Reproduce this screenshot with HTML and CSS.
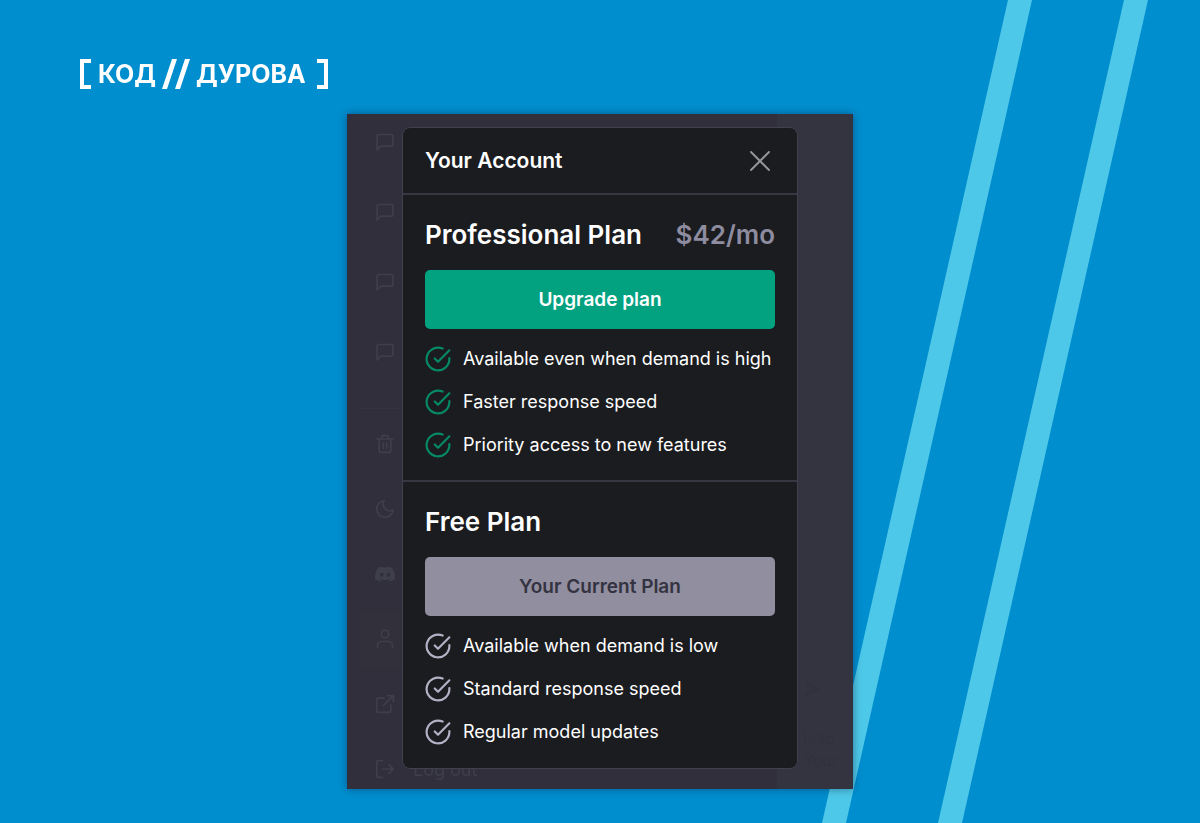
FILE: index.html
```html
<!DOCTYPE html>
<html lang="en">
<head>
<meta charset="utf-8">
<title>Your Account</title>
<link rel="stylesheet" href="styles.css">
</head>
<body>
<svg class="defs" aria-hidden="true">
  <symbol id="chat" viewBox="0 0 24 24"><path d="M21.500 15a2 2 0 0 1-2 2H7l-4.500 4.500V5a2 2 0 0 1 2-2h15a2 2 0 0 1 2 2z"/></symbol>
  <symbol id="check" viewBox="0 0 24 24"><path d="M22.500 11.080V12a10.500 10.500 0 1 1-6.230-9.590"/><path d="M22.500 4 12 14.510l-3-3"/></symbol>
</svg>
<svg class="stripes" viewBox="0 0 1200 823" preserveAspectRatio="xMaxYMid slice" aria-hidden="true">
  <path d="M1008 0h24L846 823h-24zM1124 0h24L962 823h-24z"/>
</svg>
<div class="page">
  <header class="logo" lang="ru">
    <svg class="bracket" viewBox="0 0 12 30" aria-hidden="true"><path d="M11 2H2v26h9"/></svg>
    <span class="word first">КОД</span>
    <svg class="slashes" viewBox="0 0 28 30" aria-hidden="true"><path d="M10 0h5L5 30H0zM23 0h5L18 30h-5z"/></svg>
    <span class="word">ДУРОВА</span>
    <svg class="bracket last" viewBox="0 0 12 30" aria-hidden="true"><path d="M1 2h9v26H1"/></svg>
  </header>
  <main class="shot">
    <div class="backdrop">
      <nav class="sidebar" aria-label="Sidebar">
        <div class="chats">
          <a href="#" aria-label="Chat 1"><svg class="icon"><use href="#chat"/></svg></a>
          <a href="#" aria-label="Chat 2"><svg class="icon"><use href="#chat"/></svg></a>
          <a href="#" aria-label="Chat 3"><svg class="icon"><use href="#chat"/></svg></a>
          <a href="#" aria-label="Chat 4"><svg class="icon"><use href="#chat"/></svg></a>
        </div>
        <div class="tools">
          <a href="#" aria-label="Clear conversations"><svg class="icon" viewBox="0 0 24 24"><path d="M2 6h20M19 6v14a2 2 0 0 1-2 2H7a2 2 0 0 1-2-2V6M8 6V4a2 2 0 0 1 2-2h4a2 2 0 0 1 2 2v2M10 11v6M14 11v6"/></svg></a>
          <a href="#" aria-label="Dark mode"><svg class="icon" viewBox="0 0 24 24"><path d="M22 13A10 10 0 1 1 11 2a8 8 0 0 0 11 11z"/></svg></a>
          <a href="#" aria-label="Discord"><svg class="icon solid" viewBox="0 0 24 24"><path fill-rule="evenodd" d="M20.3 4.4A20 20 0 0 0 15.4 3l-.7 1.3a18 18 0 0 0-5.4 0L8.600 3a20 20 0 0 0-4.900 1.400C.6 9-.3 13.600.1 18a20 20 0 0 0 6 3l1.300-2.100-1.900-.9.400-.3a14 14 0 0 0 12.200 0l.4.3-1.900.9 1.300 2.100a20 20 0 0 0 6-3c.5-5.100-.8-9.600-3.600-13.600zM8 15.300a2.200 2.400 0 1 1 0-4.800 2.200 2.400 0 0 1 0 4.800zm8 0a2.200 2.400 0 1 1 0-4.800 2.200 2.400 0 0 1 0 4.800z"/></svg></a>
          <a href="#" class="active" aria-label="Account"><svg class="icon" viewBox="0 0 24 24"><path d="M21 22v-2a5 5 0 0 0-5-5H8a5 5 0 0 0-5 5v2"/><circle cx="12" cy="6" r="4.500"/></svg></a>
          <a href="#" aria-label="Updates"><svg class="icon" viewBox="0 0 24 24"><path d="M19 13v7a2 2 0 0 1-2 2H4a2 2 0 0 1-2-2V7a2 2 0 0 1 2-2h7M15 2h7v7M10 14 22 2"/></svg></a>
          <a href="#"><svg class="icon" viewBox="0 0 24 24"><path d="M9 22H4a2 2 0 0 1-2-2V4a2 2 0 0 1 2-2h5M17 17l5-5-5-5M22 12H9"/></svg><span>Log out</span></a>
        </div>
      </nav>
      <div class="conversation">
        <svg class="send" viewBox="0 0 24 24" aria-hidden="true"><path d="M2 2l20 10L2 22l3-8 8-2-8-2z"/></svg>
        <p>is to<br>Your</p>
      </div>
    </div>
    <section class="modal" role="dialog" aria-labelledby="title">
      <div class="modal-head">
        <h1 id="title">Your Account</h1>
        <button class="close" aria-label="Close"><svg viewBox="0 0 20 20"><path d="M1 1l18 18M19 1 1 19"/></svg></button>
      </div>
      <section class="plan pro">
        <div class="plan-head"><h2>Professional Plan</h2><span class="price">$42/mo</span></div>
        <button class="action">Upgrade plan</button>
        <ul>
          <li><svg class="check"><use href="#check"/></svg>Available even when demand is high</li>
          <li><svg class="check"><use href="#check"/></svg>Faster response speed</li>
          <li><svg class="check"><use href="#check"/></svg>Priority access to new features</li>
        </ul>
      </section>
      <section class="plan">
        <div class="plan-head"><h2>Free Plan</h2></div>
        <button class="action current">Your Current Plan</button>
        <ul>
          <li><svg class="check"><use href="#check"/></svg>Available when demand is low</li>
          <li><svg class="check"><use href="#check"/></svg>Standard response speed</li>
          <li><svg class="check"><use href="#check"/></svg>Regular model updates</li>
        </ul>
      </section>
    </section>
  </main>
</div>
</body>
</html>
```
FILE: styles.css
```css
* { box-sizing: border-box; }
body {
  margin: 0;
  background: #008ecf;
  color: #fff;
  font-family: Inter, "Liberation Sans", sans-serif;
}
h1, h2, p, ul { margin: 0; padding: 0; }
button { font: inherit; border: 0; cursor: pointer; }
svg { display: block; fill: none; flex: none; }
.defs { position: absolute; width: 0; height: 0; }
.stripes { position: fixed; inset: 0; width: 100%; height: 100%; z-index: -1; fill: #4ec8e8; }

.page { min-height: 100vh; padding: 59px 80px 33px; }
.logo { display: flex; align-items: center; height: 30px; }
.bracket { width: 12px; height: 30px; stroke: #fff; stroke-width: 4; }
.bracket.last { margin-left: 10px; }
.slashes { width: 28px; height: 30px; margin: 0 6px; fill: #fff; }
.word { font-size: 25px; font-weight: 700; line-height: 30px; }
.word.first { margin-left: 6px; }

.shot {
  display: grid;
  width: fit-content;
  margin: 25px auto 0;
  background: #343340;
  box-shadow: 0 0 8px rgba(0, 20, 50, .45);
}
.backdrop { grid-area: 1 / 1; display: flex; color: #3f3e4b; }
.sidebar { width: 430px; background: #302f3b; }
.sidebar a { display: flex; align-items: center; gap: 18px; padding-left: 16px; color: inherit; text-decoration: none; font-size: 18px; }
.chats, .tools { display: flex; flex-direction: column; margin-left: 12px; }
.chats { gap: 14px; padding-bottom: 28px; }
.chats a { height: 56px; }
.tools { gap: 25px; padding-top: 15px; border-top: 1px solid #353440; }
.tools a { height: 40px; }
.tools .active { background: #31303b; box-shadow: 0 8px #31303b, 0 -8px #31303b; }
.icon { width: 20px; height: 20px; stroke: currentColor; stroke-width: 2; stroke-linecap: round; stroke-linejoin: round; overflow: visible; }
.icon.solid { fill: currentColor; stroke: none; }
.conversation { flex: 1; display: flex; flex-direction: column; justify-content: flex-end; gap: 28px; padding: 0 0 18px 26px; color: #32313e; font-size: 16px; line-height: 22px; }
.send { width: 20px; height: 20px; fill: currentColor; }

.modal {
  grid-area: 1 / 1;
  width: 396px;
  margin: 13px 55px 20px;
  border: 1px solid #41404d;
  border-radius: 8px;
  background: #1b1c1f;
  z-index: 1;
}
.modal-head { display: flex; align-items: center; justify-content: space-between; height: 67px; padding: 0 22px; border-bottom: 2px solid #373642; }
h1 { font-size: 21px; font-weight: 600; line-height: 30px; }
.close { display: flex; padding: 0 5px; background: none; }
.close svg { width: 20px; height: 20px; stroke: #96969a; stroke-width: 2; stroke-linecap: round; overflow: visible; }
.plan { padding: 23px 22px 21px; }
.pro { border-bottom: 2px solid #373642; }
.plan-head { display: flex; justify-content: space-between; line-height: 34px; font-size: 26px; font-weight: 600; }
h2 { font: inherit; }
.price { color: #8e8ca0; }
.action { width: 100%; height: 59px; margin: 18px 0 16px; border-radius: 5px; background: #02a281; color: #fff; font-size: 19px; font-weight: 600; }
.current { background: #918ea0; color: #343340; }
ul { display: grid; gap: 15px; list-style: none; }
li { display: flex; align-items: center; gap: 12px; font-size: 18px; line-height: 28px; white-space: nowrap; }
.check { width: 26px; height: 26px; stroke: #b3b1c6; stroke-width: 2; stroke-linecap: round; stroke-linejoin: round; }
.pro .check { stroke: #068967; }
```
